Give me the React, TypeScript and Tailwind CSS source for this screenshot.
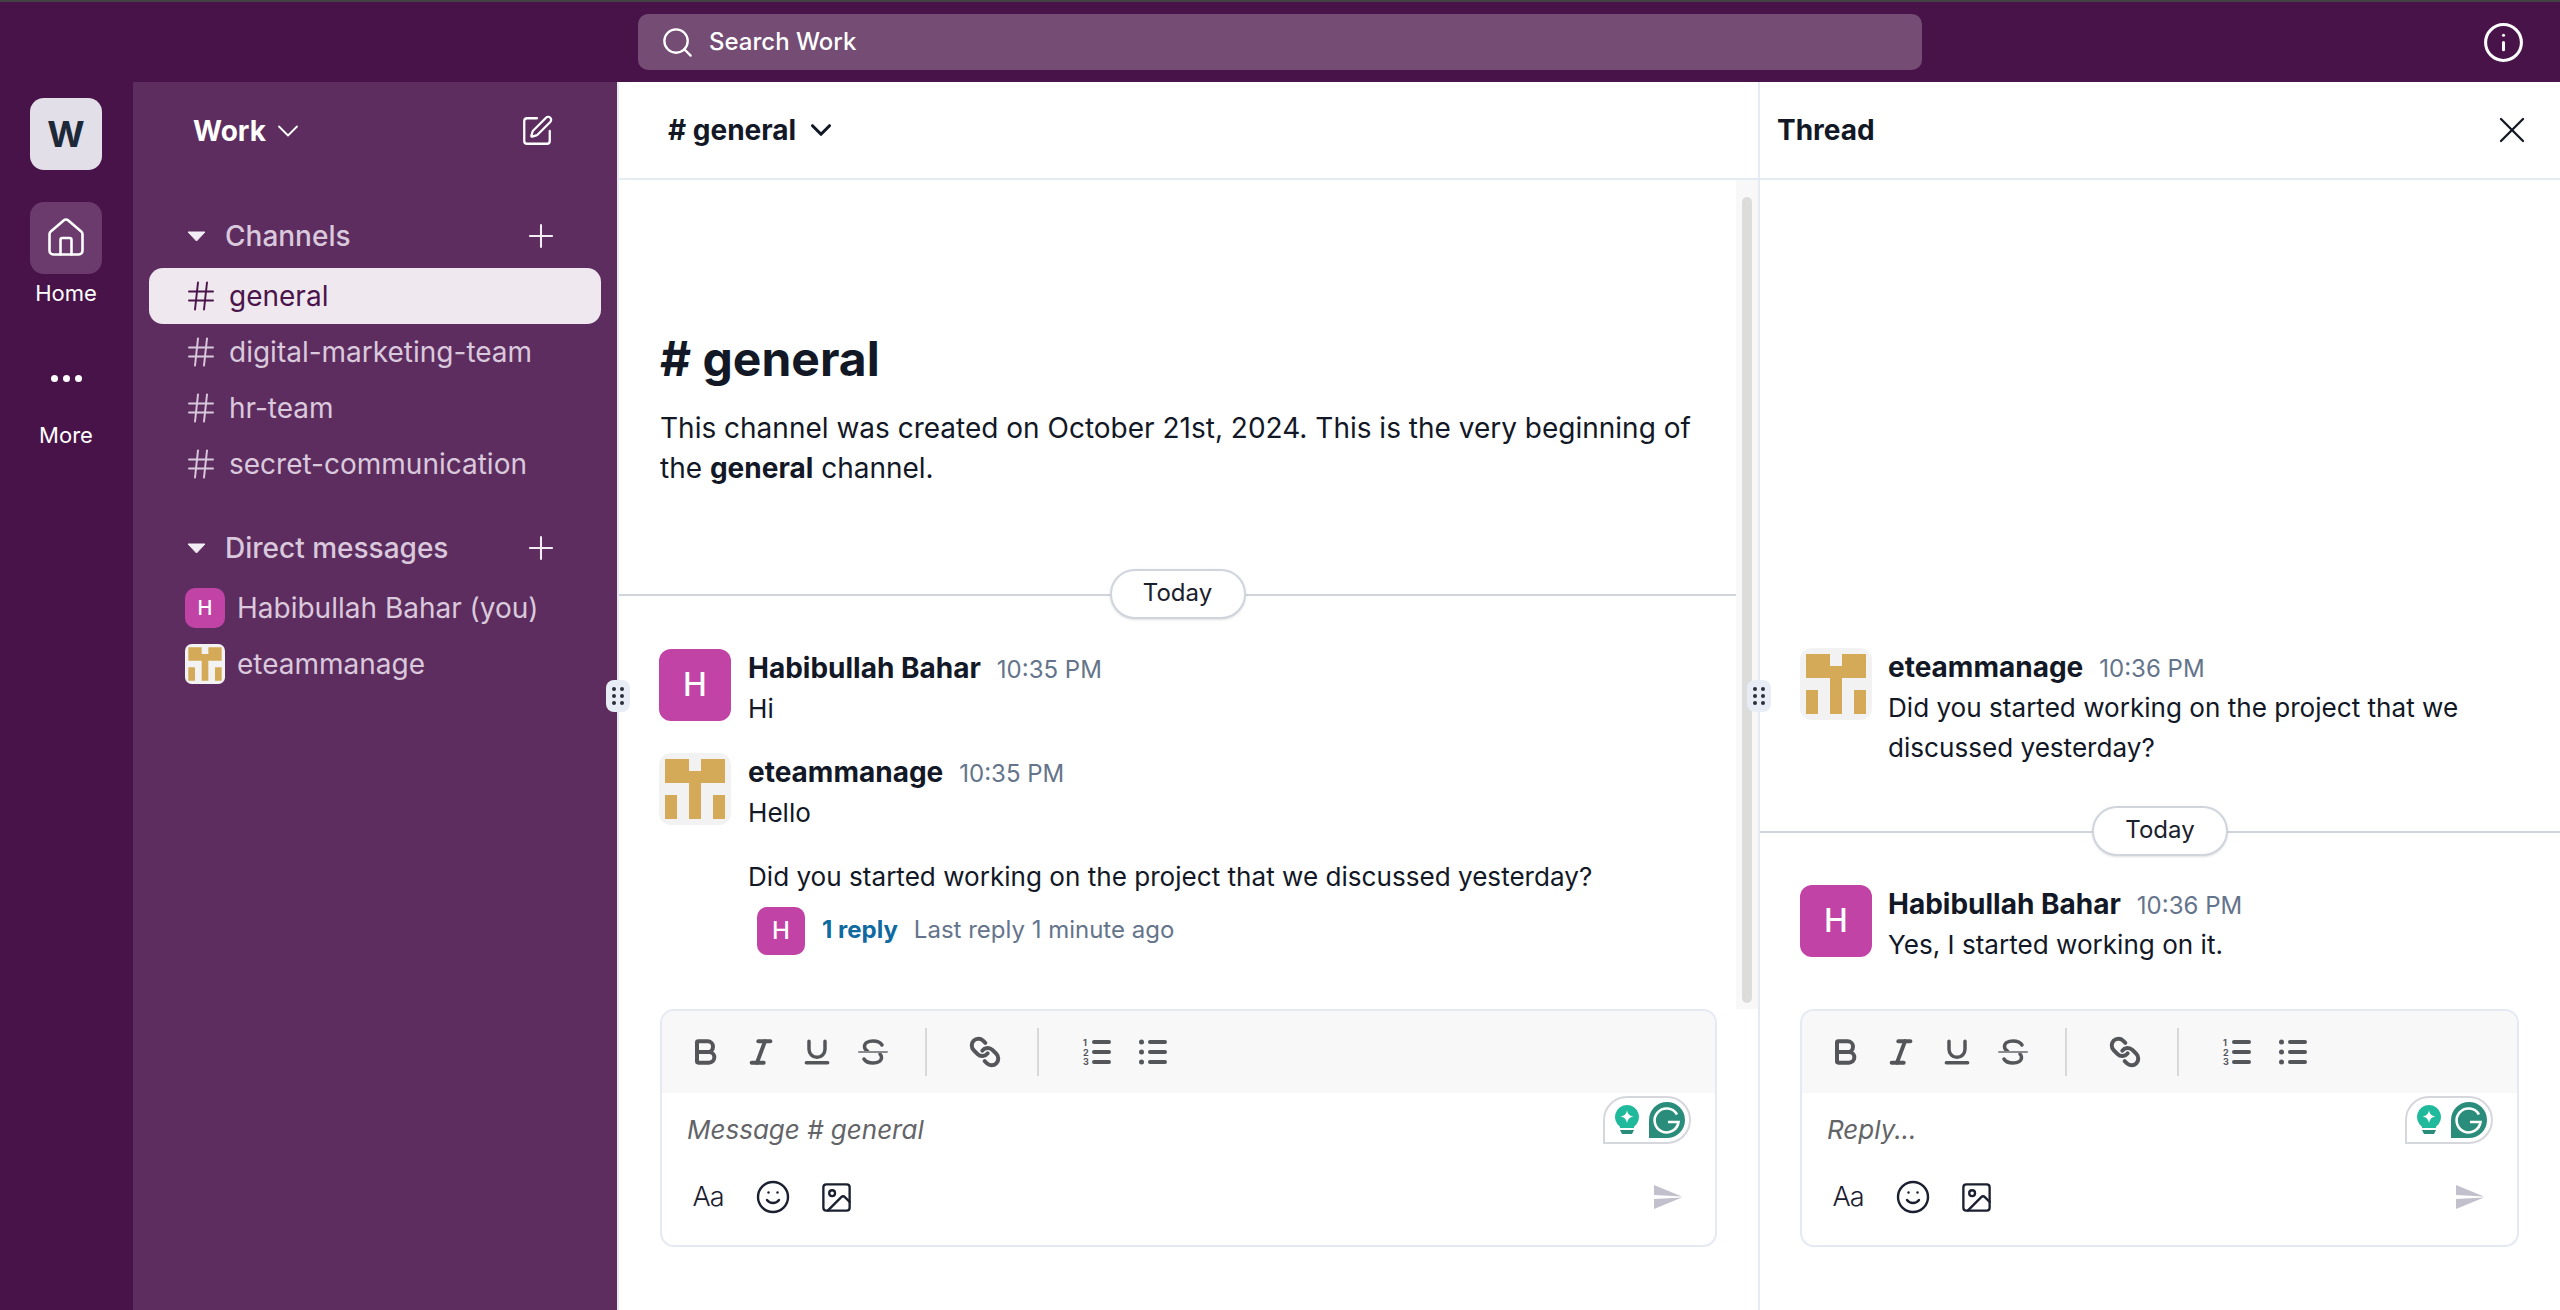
import { Bold, ChevronDown, Hash, House, Image, Info, Italic, Link, Plus, Search, Smile, SquarePen, Underline, X } from "lucide-react"
import type { ReactNode } from "react"

const Identicon = ({ className }: { className: string }) => (
  <svg viewBox="0 0 72 72" className={className}>
    <rect width="72" height="72" rx="12" fill="#f2f2f3" />
    <path d="M6 6h24v12h12V6h24v24H42v36H30V30H6zM6 42h12v24H6zM54 42h12v24H54z" fill="#d4aa59" />
  </svg>
)

const Caret = () => (
  <svg width="19" height="11" viewBox="0 0 19 11" className="shrink-0">
    <path d="M1 1h17l-8.500 9z" fill="#f1edf2" stroke="#f1edf2" strokeLinejoin="round" />
  </svg>
)

const SectionHeader = ({ label }: { label: string }) => (
  <div className="flex h-[56px] items-center pl-[54px] pr-[57px]">
    <Caret />
    <span className="ml-[19px] flex-1 text-[28px] font-medium text-[#dac9dd]">{label}</span>
    <Plus size={38} strokeWidth={1.3} className="text-[#f1edf2]" />
  </div>
)

const ChannelRow = ({ name, active }: { name: string; active?: boolean }) => (
  <div className={`mx-[16px] flex h-[56px] w-[452px] items-center gap-[10px] rounded-[14px] pl-[34px] ${active ? "bg-[#efe8ef] text-[#4a154b]" : "text-[#dac9dd]"}`}>
    <Hash size={36} strokeWidth={1.3} />
    <span className="text-[28px]">{name}</span>
  </div>
)

const Handle = ({ className }: { className: string }) => (
  <div className={`absolute top-[598px] z-10 grid h-[32px] w-[24px] grid-cols-2 content-center justify-center gap-x-[3px] gap-y-[3px] rounded-[8px] bg-[#e8edf5] px-[6px] ${className}`}>
    {[0, 1, 2, 3, 4, 5].map((i) => (
      <span key={i} className="h-[4px] w-[4px] rounded-full bg-[#2a2e3a]" />
    ))}
  </div>
)

const DayDivider = ({ className }: { className: string }) => (
  <div className={`relative flex h-[50px] items-center justify-center ${className}`}>
    <div className="absolute inset-x-0 top-[25px] h-[2px] bg-[#d0d5dd]" />
    <div className="relative flex h-[50px] w-[136px] items-center justify-center rounded-full border-2 border-[#d0d5dd] bg-white pb-[2px] text-[24px] text-[#1a202c] shadow-sm">Today</div>
  </div>
)

const Message = ({ name, time, avatar, className, children }: { name: string; time: string; avatar: ReactNode; className?: string; children: ReactNode }) => (
  <div className={`flex ${className ?? ""}`}>
    {avatar}
    <div className="min-w-0 flex-1">
      <div className="flex h-[40px] items-baseline gap-[16px] leading-[38px]">
        <span className="text-[28px] font-bold text-[#121826]">{name}</span>
        <span className="text-[24px] text-[#64748b]">{time}</span>
      </div>
      <div className="text-[26.1px] leading-[40px] text-[#121826]">{children}</div>
    </div>
  </div>
)

const HabibAvatar = () => (
  <div className="flex h-[72px] w-[72px] shrink-0 items-center justify-center rounded-[12px] bg-[#c143a6] text-[32px] font-medium text-white">H</div>
)

const ToolBtn = ({ children }: { children: ReactNode }) => (
  <div className="flex w-[56px] items-center justify-center text-[#55565a]">{children}</div>
)

const Grammarly = () => (
  <div className="absolute right-[24px] top-[85px] flex h-[48px] w-[88px] items-center justify-between rounded-[24px] rounded-bl-none border-2 border-[#d6d6dd] bg-white pl-[10px] pr-[4px]">
    <svg width="24" height="30" viewBox="0 0 24 30">
      <path d="M12 0a12 12 0 0 1 7 21.700V23H5v-1.300A12 12 0 0 1 12 0z" fill="#21b99b" />
      <path d="M5 25h14l-2 4H7z" fill="#2a8c7a" />
      <path d="M12 5c.6 4 2.600 6 6.500 6.500-3.900.6-5.900 2.600-6.500 6.500-.6-3.900-2.600-5.900-6.500-6.500 3.900-.5 5.900-2.500 6.500-6.500z" fill="#fff" />
    </svg>
    <svg width="36" height="36" viewBox="0 0 36 36">
      <path d="M18 0a18 18 0 0 1 0 36H0V18A18 18 0 0 1 18 0z" fill="#2a8c7a" />
      <path d="M28 12.500A12 12 0 1 0 29.500 20H19" fill="none" stroke="#fff" strokeWidth="2.600" />
    </svg>
  </div>
)

const Composer = ({ placeholder }: { placeholder: string }) => (
  <div className="relative h-[238px] overflow-hidden rounded-[14px] border-2 border-[#e5e9f2] bg-white">
    <div className="flex h-[82px] items-center bg-[#f8f8f9] pl-[15px]">
      <ToolBtn><Bold size={32} strokeWidth={3} /></ToolBtn>
      <ToolBtn><Italic size={32} strokeWidth={3} /></ToolBtn>
      <ToolBtn><Underline size={32} strokeWidth={2.6} /></ToolBtn>
      <ToolBtn>
        <svg width="30" height="26" viewBox="0 0 30 26" fill="none" stroke="currentColor" strokeWidth="3.500" strokeLinecap="round">
          <path d="M24 6c-1.500-2.500-4.500-4-9-4-5 0-8.500 2.200-8.500 5.500 0 2 1 3.500 3 4.500" />
          <path d="M6 20c1.500 2.500 4.500 4 9 4 5 0 8.500-2.200 8.500-5.500 0-1.500-.5-2.500-1.500-3.500" />
          <path d="M1 13h28" strokeWidth="2" stroke="#8a8b8f" />
        </svg>
      </ToolBtn>
      <div className="ml-[24px] mr-[30px] h-[48px] w-[2px] bg-[#d9d9db]" />
      <ToolBtn><Link size={32} strokeWidth={3} className="-scale-x-100" /></ToolBtn>
      <div className="ml-[24px] mr-[30px] h-[48px] w-[2px] bg-[#d9d9db]" />
      <ToolBtn>
        <svg width="28" height="28" viewBox="0 0 28 28" fill="currentColor">
          <rect x="9" y="2" width="19" height="4" rx="2" />
          <rect x="9" y="12" width="19" height="4" rx="2" />
          <rect x="9" y="22" width="19" height="4" rx="2" />
          <text x="0" y="8" fontSize="9" fontWeight="700" fontFamily="Inter">1</text>
          <text x="0" y="17.500" fontSize="9" fontWeight="700" fontFamily="Inter">2</text>
          <text x="0" y="27" fontSize="9" fontWeight="700" fontFamily="Inter">3</text>
        </svg>
      </ToolBtn>
      <ToolBtn>
        <svg width="28" height="28" viewBox="0 0 28 28" fill="currentColor">
          <rect x="9" y="2" width="19" height="4" rx="2" />
          <rect x="9" y="12" width="19" height="4" rx="2" />
          <rect x="9" y="22" width="19" height="4" rx="2" />
          <circle cx="2.500" cy="4" r="2.500" />
          <circle cx="2.500" cy="14" r="2.500" />
          <circle cx="2.500" cy="24" r="2.500" />
        </svg>
      </ToolBtn>
    </div>
    <div className="mt-[17px] pl-[25px] text-[26px] italic leading-[40px] text-[#636468]">{placeholder}</div>
    <div className="mt-[27px] flex h-[40px] items-center pl-[14px] pr-[33px] text-[#1a2030]">
      <div className="w-[64px] text-center text-[27px] font-light tracking-[-1px]">Aa</div>
      <div className="flex w-[64px] justify-center pl-[1px]"><Smile size={36} strokeWidth={1.6} /></div>
      <div className="flex w-[64px] justify-center pl-[1px]"><Image size={35} strokeWidth={1.6} /></div>
      <svg width="28" height="24" viewBox="0 0 28 24" className="ml-auto">
        <path d="M0 0l28 11.500L0 10zM0 14l28-1.500L0 24z" fill="#c3c0cd" />
      </svg>
    </div>
    <Grammarly />
  </div>
)

export default function App() {
  return (
    <div className="relative flex h-screen flex-col overflow-hidden bg-white font-['Inter',sans-serif]">
      <div className="h-[2px] bg-[#434343]" />
      <div className="flex h-[80px] items-center bg-[#481349] pl-[638px] pr-[35px]">
        <div className="flex h-[56px] w-[1284px] items-center gap-[14px] rounded-[10px] bg-[#744c74] pl-[22px] text-[24px] font-medium text-white">
          <Search size={35} strokeWidth={1.6} />
          <span>Search Work</span>
        </div>
        <Info size={43} strokeWidth={1.7} className="ml-auto text-white" />
      </div>

      <div className="relative flex min-h-0 flex-1">
        <div className="flex w-[133px] shrink-0 flex-col items-center bg-[#481349] pr-[1px] text-white">
          <div className="mt-[16px] flex h-[72px] w-[72px] items-center justify-center rounded-[14px] bg-[#e2dfe8] text-[36px] font-bold text-[#1d2939]">W</div>
          <div className="mt-[32px] flex h-[72px] w-[72px] items-center justify-center rounded-[14px] bg-[#6b3b6e]">
            <House size={44} strokeWidth={1.4} />
          </div>
          <div className="mt-[4px] text-[22px] leading-[30px]">Home</div>
          <div className="mt-[67px] flex gap-[5px]">
            <span className="h-[7px] w-[7px] rounded-full bg-white" />
            <span className="h-[7px] w-[7px] rounded-full bg-white" />
            <span className="h-[7px] w-[7px] rounded-full bg-white" />
          </div>
          <div className="mt-[38px] text-[22px] leading-[30px]">More</div>
        </div>

        <div className="w-[484px] shrink-0 bg-[#5d2d5f]">
          <div className="flex h-[96px] items-center pl-[60px] pr-[63px] pt-[1px] text-white">
            <span className="text-[28px] font-bold">Work</span>
            <ChevronDown size={36} strokeWidth={1.2} className="ml-[4px]" />
            <SquarePen size={34} strokeWidth={1.6} className="ml-auto" />
          </div>
          <div className="mt-[30px]">
            <SectionHeader label="Channels" />
          </div>
          <div className="mt-[4px]">
            <ChannelRow name="general" active />
            <ChannelRow name="digital-marketing-team" />
            <ChannelRow name="hr-team" />
            <ChannelRow name="secret-communication" />
          </div>
          <div className="mt-[28px]">
            <SectionHeader label="Direct messages" />
          </div>
          <div className="mt-[4px] pl-[52px] text-[28px] text-[#dac9dd]">
            <div className="flex h-[56px] items-center gap-[12px]">
              <div className="flex h-[40px] w-[40px] items-center justify-center rounded-[10px] bg-[#c143a6] text-[20px] font-medium text-white">H</div>
              <span>Habibullah Bahar (you)</span>
            </div>
            <div className="flex h-[56px] items-center gap-[12px]">
              <Identicon className="h-[40px] w-[40px]" />
              <span>eteammanage</span>
            </div>
          </div>
        </div>

        <Handle className="left-[606px]" />
        <Handle className="left-[1747px]" />

        <div className="flex min-w-0 flex-1 flex-col border-l-2 border-[#e5ebf3]">
          <div className="flex h-[98px] shrink-0 items-center gap-[8px] border-b-2 border-[#e5ebf3] pl-[49px] text-[#121826]">
            <span className="text-[28px] font-bold"># general</span>
            <ChevronDown size={34} strokeWidth={2.2} />
          </div>
          <div className="relative min-h-0 flex-1">
            <div className="absolute bottom-0 right-0 top-0 w-[22px] bg-[#f8f8f8] px-[6px] pb-[6px] pt-[17px]">
              <div className="h-full rounded-full bg-[#dcdcda]" />
            </div>
            <div className="mr-[22px]">
              <div className="pl-[41px] pr-[20px]">
                <h1 className="mt-[149px] text-[48px] font-bold leading-[60px] text-[#121826]"># general</h1>
                <p className="mt-[19px] text-[28px] leading-[40px] text-[#121826]">
                  This channel was created on October 21st, 2024. This is the very beginning of the <b>general</b> channel.
                </p>
              </div>
              <DayDivider className="mt-[81px]" />
              <div className="pl-[40px]">
                <Message name="Habibullah Bahar" time="10:35 PM" avatar={<HabibAvatar />} className="mt-[30px] gap-[17px]">Hi</Message>
                <Message name="eteammanage" time="10:35 PM" avatar={<Identicon className="h-[72px] w-[72px] shrink-0" />} className="mt-[24px] gap-[17px]">
                  Hello
                  <div className="mt-[24px]">Did you started working on the project that we discussed yesterday?</div>
                </Message>
                <div className="ml-[98px] mt-[10px] flex items-center">
                  <div className="flex h-[48px] w-[48px] items-center justify-center rounded-[10px] bg-[#c143a6] text-[24px] font-medium text-white">H</div>
                  <span className="ml-[17px] pb-[2px] text-[24px] font-bold text-[#0f6aa0]">1 reply</span>
                  <span className="ml-[16px] pb-[2px] text-[24px] text-[#64748b]">Last reply 1 minute ago</span>
                </div>
              </div>
            </div>
          </div>
          <div className="shrink-0 px-[41px] pb-[63px]">
            <Composer placeholder="Message # general" />
          </div>
        </div>

        <div className="flex w-[802px] shrink-0 flex-col border-l-2 border-[#e5ebf3]">
          <div className="flex h-[98px] shrink-0 items-center justify-between border-b-2 border-[#e5ebf3] pl-[17px] pr-[26px]">
            <span className="text-[28px] font-bold text-[#121826]">Thread</span>
            <X size={44} strokeWidth={1.3} className="text-[#121826]" />
          </div>
          <div className="min-h-0 flex-1">
            <div className="pl-[40px] pr-[40px]">
              <Message name="eteammanage" time="10:36 PM" avatar={<Identicon className="h-[72px] w-[72px] shrink-0" />} className="mt-[468px] gap-[16px]">
                Did you started working on the project that we discussed yesterday?
              </Message>
            </div>
            <DayDivider className="mt-[38px]" />
            <div className="pl-[40px] pr-[40px]">
              <Message name="Habibullah Bahar" time="10:36 PM" avatar={<HabibAvatar />} className="mt-[29px] gap-[16px]">Yes, I started working on it.</Message>
            </div>
          </div>
          <div className="shrink-0 pb-[63px] pl-[40px] pr-[41px]">
            <Composer placeholder="Reply..." />
          </div>
        </div>
      </div>
    </div>
  )
}
